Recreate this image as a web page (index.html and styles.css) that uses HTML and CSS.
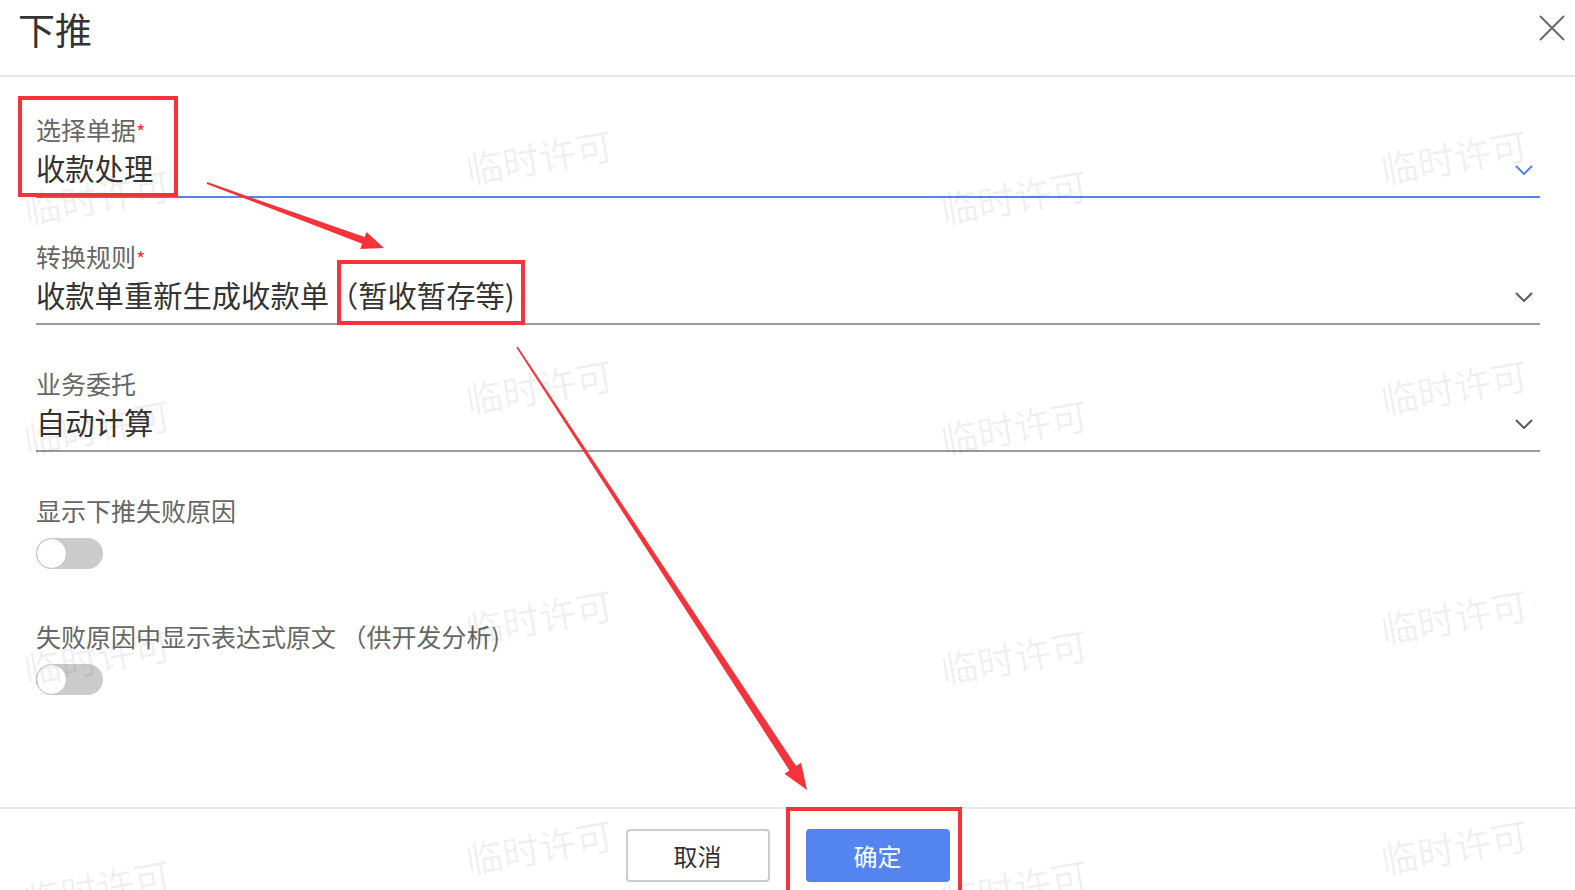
FILE: index.html
```html
<!DOCTYPE html>
<html lang="zh-CN">
<head>
  <meta charset="UTF-8">
  <meta name="viewport" content="width=device-width, initial-scale=1">
  <title>下推</title>

  <!-- CSS -->
  <link rel="stylesheet" href="styles.css">
</head>
<body>
  <div class="dialog">
    <header class="dialog-header">
      <h1>下推</h1>
      <button class="close-btn" title="关闭">
        <svg width="28" height="28" viewBox="0 0 28 28"><path d="M2 2 L26 26 M26 2 L2 26" /></svg>
      </button>
    </header>

    <main class="dialog-body">
      <div class="field">
        <div class="field-label">选择单据<span class="req">*</span></div>
        <div class="field-value active">
          <span>收款处理</span>
          <svg class="chevron" width="18" height="10" viewBox="0 0 18 10"><path d="M1 1 L9 9 L17 1" /></svg>
        </div>
      </div>

      <div class="field">
        <div class="field-label">转换规则<span class="req">*</span></div>
        <div class="field-value">
          <span>收款单重新生成收款单（暂收暂存等)</span>
          <svg class="chevron" width="18" height="10" viewBox="0 0 18 10"><path d="M1 1 L9 9 L17 1" /></svg>
        </div>
      </div>

      <div class="field">
        <div class="field-label">业务委托</div>
        <div class="field-value">
          <span>自动计算</span>
          <svg class="chevron" width="18" height="10" viewBox="0 0 18 10"><path d="M1 1 L9 9 L17 1" /></svg>
        </div>
      </div>

      <div class="switch-field">
        <div class="field-label">显示下推失败原因</div>
        <span class="switch"><span class="knob"></span></span>
      </div>

      <div class="switch-field">
        <div class="field-label">失败原因中显示表达式原文 （供开发分析)</div>
        <span class="switch"><span class="knob"></span></span>
      </div>
    </main>

    <footer class="dialog-footer">
      <button class="btn">取消</button>
      <button class="btn btn-primary">确定</button>
    </footer>

    <!-- 水印 -->
    <div class="watermark">
      <span class="wm wm-low">临时许可</span><span class="wm">临时许可</span><span class="wm wm-low">临时许可</span><span class="wm">临时许可</span>
      <span class="wm wm-low">临时许可</span><span class="wm">临时许可</span><span class="wm wm-low">临时许可</span><span class="wm">临时许可</span>
      <span class="wm wm-low">临时许可</span><span class="wm">临时许可</span><span class="wm wm-low">临时许可</span><span class="wm">临时许可</span>
      <span class="wm wm-low">临时许可</span><span class="wm">临时许可</span><span class="wm wm-low">临时许可</span><span class="wm">临时许可</span>
    </div>

    <!-- 标注 -->
    <svg class="marks" viewBox="0 0 1575 890">
      <rect x="20" y="98" width="156" height="97" />
      <rect x="339" y="262" width="184" height="61" />
      <rect x="788" y="809" width="172" height="88" />
      <polygon class="arrow" points="206.7,183.9 207.3,182.1 364.6,237.1 366.5,232.0 384,248 360.3,248.9 362.1,243.7" />
      <polygon class="arrow" points="516.3,347.4 517.7,346.6 796.1,766.1 801.1,762.8 807,790 784.4,773.7 789.4,770.4" />
    </svg>
  </div>
</body>
</html>
```

FILE: styles.css
```css
:root {
  --text: #333333;
  --label: #666666;
  --line: #9a9a9a;
  --primary: #5484f0;
  --mark: #f5333a;
}

body {
  margin: 0;
  padding: 0;
  background: #ffffff;
  color: var(--text);
  font-family: "Noto Sans CJK SC", "Noto Sans", sans-serif;
}

.dialog {
  position: relative;
  height: 100vh;
  display: flex;
  flex-direction: column;
  overflow: hidden;
}

.dialog-header {
  height: 75px;
  border-bottom: 2px solid #e8e8e8;
  display: flex;
  justify-content: space-between;
  align-items: center;
  padding: 0 9px 0 18px;
}

.dialog-header h1 {
  margin: 0;
  font-size: 37px;
  font-weight: normal;
  line-height: 1;
  margin-top: -16px;
  color: #333;
}

.close-btn {
  border: none;
  background: none;
  padding: 0;
  margin-top: -16px;
  cursor: pointer;
}

.close-btn svg path {
  stroke: #6a6a6a;
  stroke-width: 2;
  fill: none;
}

.dialog-body {
  flex: 1;
  padding: 35px 35px 0 36px;
}

.field {
  margin-bottom: 41px;
}

.field-label {
  font-size: 25px;
  line-height: 34px;
  height: 34px;
  color: var(--label);
}

.req {
  color: var(--mark);
  font-size: 20px;
  line-height: 0;
}

.field-value {
  height: 42px;
  padding-bottom: 8px;
  display: flex;
  justify-content: space-between;
  align-items: center;
  font-size: 29.3px;
  color: var(--text);
  border-bottom: 2px solid var(--line);
}

.field-value.active {
  border-bottom-color: var(--primary);
}

.chevron {
  margin-right: 7px;
  margin-bottom: -6px;
}

.chevron path {
  fill: none;
  stroke: #5a5a5a;
  stroke-width: 2;
}

.active .chevron path {
  stroke: var(--primary);
}

.switch-field {
  margin-bottom: 50px;
}

.switch {
  display: block;
  margin-top: 11px;
  width: 67px;
  height: 31px;
  border-radius: 16px;
  background: #cbcbcb;
  position: relative;
}

.knob {
  position: absolute;
  left: 0;
  top: 0;
  width: 29px;
  height: 29px;
  border-radius: 50%;
  background: #fff;
  border: 1px solid #c4c4c4;
}

.dialog-footer {
  height: 83px;
  border-top: 2px solid #e6e8ee;
  display: flex;
  justify-content: center;
  align-items: flex-start;
  gap: 36px;
  padding-top: 20px;
  box-sizing: border-box;
}

.btn {
  width: 144px;
  height: 53px;
  border: 2px solid #c9ccd2;
  border-radius: 4px;
  background: #fff;
  color: var(--text);
  font-family: inherit;
  font-size: 24px;
  cursor: pointer;
}

.btn-primary {
  background: var(--primary);
  border-color: var(--primary);
  color: #fff;
}

.watermark {
  position: absolute;
  inset: 0;
  pointer-events: none;
  display: grid;
  grid-template-columns: 442px 475px 440px 300px;
  grid-auto-rows: 230px;
  padding: 138px 0 0 23px;
}

.wm {
  display: block;
  width: 148px;
  height: 37px;
  font-size: 37px;
  line-height: 37px;
  color: rgba(0, 0, 0, 0.065);
  transform: rotate(-10deg);
  white-space: nowrap;
}

.wm-low {
  margin-top: 40px;
}

.marks {
  position: absolute;
  left: 0;
  top: 0;
  width: 1575px;
  height: 890px;
  pointer-events: none;
}

.marks rect {
  fill: none;
  stroke: var(--mark);
  stroke-width: 4;
}

.marks .arrow {
  fill: var(--mark);
}
```
